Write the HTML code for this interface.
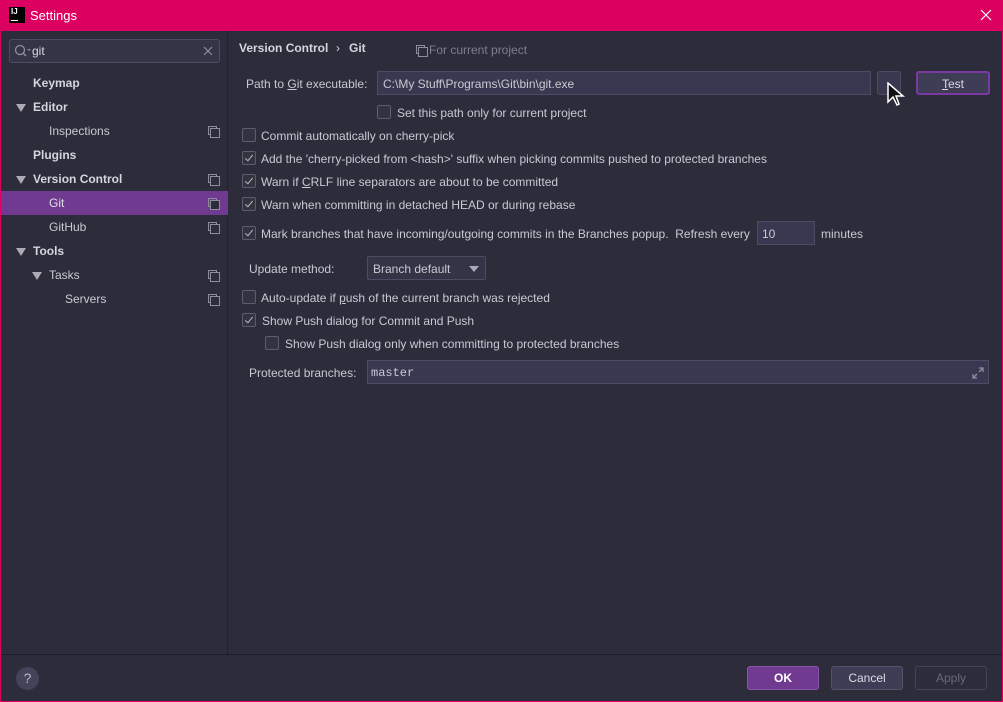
<!DOCTYPE html>
<html><head><meta charset="utf-8"><style>
*{margin:0;padding:0;box-sizing:border-box}
body{width:1003px;height:702px;background:#2d2c3b;font-family:"Liberation Sans",sans-serif;font-size:12px;color:#c9c9d3;position:relative;overflow:hidden}
.a{position:absolute;white-space:nowrap}
.win{position:absolute;left:0;top:0;width:1003px;height:702px;border:1px solid #dc0060;border-top:none}
.title{left:0;top:0;width:1003px;height:31px;background:#dc0060;color:#fff;font-size:13px}
.side{left:1px;top:31px;width:227px;height:623px;background:#2d2c3b;border-right:1px solid #22212c}
.cb{position:absolute;width:14px;height:14px;border:1px solid #5d5b70;border-radius:2px;background:#33323f}
.cb.on::after{content:"";position:absolute;left:4px;top:1px;width:3px;height:7px;border:solid #b9b8c4;border-width:0 1.5px 1.5px 0;transform:rotate(40deg)}
.fld{position:absolute;background:#3a3850;border:1px solid #4e4c64}
.b{font-weight:bold;color:#d5d5de}
.tri{position:absolute;width:0;height:0;border-left:5px solid transparent;border-right:5px solid transparent;border-top:8px solid #aaa9b5}
.cp{position:absolute;width:9px;height:9px;border:1px solid #8e8d9c}
.cp::after{content:"";position:absolute;left:1px;top:1px;width:8px;height:8px;border:1px solid #8e8d9c;background:#2d2c3b}
.btn{position:absolute;height:24px;border-radius:3px;text-align:center;line-height:22px;font-size:12px}
</style></head><body>
<div class="win"></div>
<div class="a title">
 <div class="a" style="left:9px;top:7px;width:16px;height:16px;background:#000;color:#fff;font-size:8px;font-weight:bold;line-height:9px;padding-left:2px">IJ<div style="position:absolute;left:2px;bottom:2px;width:7px;height:1px;background:#fff"></div></div>
 <div class="a" style="left:30px;top:8px">Settings</div>
 <svg class="a" style="left:980px;top:9px" width="12" height="12"><path d="M1 1L11 11M11 1L1 11" stroke="#fff" stroke-width="1.2"/></svg>
</div>
<div class="a side">
 <div class="fld" style="left:8px;top:8px;width:211px;height:24px;border-radius:3px;background:#353447">
  <svg class="a" style="left:4px;top:4px" width="20" height="14"><circle cx="6" cy="6" r="4.5" fill="none" stroke="#8e8d9c" stroke-width="1.3"/><line x1="9" y1="9" x2="12" y2="12" stroke="#8e8d9c" stroke-width="1.5"/><path d="M13 5h4l-2 2z" fill="#8e8d9c"/></svg>
  <div class="a" style="left:22px;top:4px;color:#d5d5de">git</div>
  <svg class="a" style="left:193px;top:6px" width="10" height="10"><path d="M1 1L9 9M9 1L1 9" stroke="#8e8d9c" stroke-width="1.2"/></svg>
 </div>
 <div class="a b" style="left:32px;top:45px">Keymap</div>
 <div class="tri" style="left:15px;top:73px"></div><div class="a b" style="left:32px;top:69px">Editor</div>
 <div class="a" style="left:48px;top:93px">Inspections</div><div class="cp" style="left:207px;top:95px"></div>
 <div class="a b" style="left:32px;top:117px">Plugins</div>
 <div class="tri" style="left:15px;top:145px"></div><div class="a b" style="left:32px;top:141px">Version Control</div><div class="cp" style="left:207px;top:143px"></div>
 <div class="a" style="left:0;top:160px;width:227px;height:24px;background:#6f3a8f"></div>
 <div class="a" style="left:48px;top:165px;color:#e0e0e8">Git</div><div class="cp" style="left:207px;top:167px"></div>
 <div class="a" style="left:48px;top:189px">GitHub</div><div class="cp" style="left:207px;top:191px"></div>
 <div class="tri" style="left:15px;top:217px"></div><div class="a b" style="left:32px;top:213px">Tools</div>
 <div class="tri" style="left:31px;top:241px"></div><div class="a" style="left:48px;top:237px">Tasks</div><div class="cp" style="left:207px;top:239px"></div>
 <div class="a" style="left:64px;top:261px">Servers</div><div class="cp" style="left:207px;top:263px"></div>
</div>
<div class="a b" style="left:239px;top:41px">Version Control</div>
<div class="a b" style="left:336px;top:41px;font-weight:normal">›</div>
<div class="a b" style="left:349px;top:41px">Git</div>
<div class="cp" style="left:416px;top:45px"></div>
<div class="a" style="left:429px;top:43px;color:#7f7e8f">For current project</div>

<div class="a" style="left:246px;top:77px">Path to <u>G</u>it executable:</div>
<div class="fld" style="left:377px;top:71px;width:494px;height:24px"><div class="a" style="left:5px;top:5px">C:\My Stuff\Programs\Git\bin\git.exe</div></div>
<div class="fld" style="left:877px;top:71px;width:24px;height:24px;border-radius:3px;background:#3a3850"></div>
<svg class="a" style="left:886px;top:82px" width="22" height="26"><path d="M2 1 L2 20 L7 15 L11 23 L13 22 L10 14 L17 14 Z" fill="#111" stroke="#fff" stroke-width="1.5"/></svg>
<div class="btn" style="left:916px;top:71px;width:74px;border:2px solid #7b3aa3;background:#3f3c56;color:#dcdce4"><u>T</u>est</div>
<div class="cb" style="left:377px;top:105px"></div><div class="a" style="left:397px;top:106px">Set this path only for current project</div>

<div class="cb" style="left:242px;top:128px"></div><div class="a" style="left:261px;top:129px">Commit automatically on cherry-pick</div>
<div class="cb on" style="left:242px;top:151px"></div><div class="a" style="left:261px;top:152px">Add the 'cherry-picked from &lt;hash&gt;' suffix when picking commits pushed to protected branches</div>
<div class="cb on" style="left:242px;top:174px"></div><div class="a" style="left:261px;top:175px">Warn if <u>C</u>RLF line separators are about to be committed</div>
<div class="cb on" style="left:242px;top:197px"></div><div class="a" style="left:261px;top:198px">Warn when committing in detached HEAD or during rebase</div>
<div class="cb on" style="left:242px;top:226px"></div><div class="a" style="left:261px;top:227px">Mark branches that have incoming/outgoing commits in the Branches popup.&nbsp; Refresh every</div>
<div class="fld" style="left:757px;top:221px;width:58px;height:24px"><div class="a" style="left:4px;top:5px">10</div></div>
<div class="a" style="left:821px;top:227px">minutes</div>

<div class="a" style="left:249px;top:262px">Update method:</div>
<div class="fld" style="left:367px;top:256px;width:119px;height:24px;border-radius:2px;background:#353447"><div class="a" style="left:5px;top:5px">Branch default</div><div class="tri" style="left:101px;top:9px;border-top-width:6px;border-left-width:5px;border-right-width:5px"></div></div>

<div class="cb" style="left:242px;top:290px"></div><div class="a" style="left:261px;top:291px">Auto-update if <u>p</u>ush of the current branch was rejected</div>
<div class="cb on" style="left:242px;top:313px"></div><div class="a" style="left:262px;top:314px">Show Push dialog for Commit and Push</div>
<div class="cb" style="left:265px;top:336px"></div><div class="a" style="left:285px;top:337px">Show Push dialog only when committing to protected branches</div>
<div class="a" style="left:249px;top:366px">Protected branches:</div>
<div class="fld" style="left:367px;top:360px;width:622px;height:24px"><div class="a" style="left:3px;top:5px;font-family:'Liberation Mono',monospace;font-size:12px">master</div>
<svg class="a" style="left:603px;top:5px" width="14" height="14"><path d="M8 2h4v4M12 2L8 6M2 8v4h4M2 12l4-4" stroke="#8e8d9c" stroke-width="1.3" fill="none"/></svg></div>

<div class="a" style="left:1px;top:654px;width:1001px;height:1px;background:#1f1e28"></div>
<div class="a" style="left:16px;top:667px;width:23px;height:23px;border-radius:50%;background:#45435a;color:#b8b7c4;text-align:center;line-height:23px;font-size:14px">?</div>
<div class="btn" style="left:747px;top:666px;width:72px;background:#6f3a8f;border:1px solid #8a55ad;color:#fff;font-weight:bold">OK</div>
<div class="btn" style="left:831px;top:666px;width:72px;background:#3f3c56;border:1px solid #55536a;color:#dcdce4">Cancel</div>
<div class="btn" style="left:915px;top:666px;width:72px;border:1px solid #45435a;color:#6a697a">Apply</div>
</body></html>
